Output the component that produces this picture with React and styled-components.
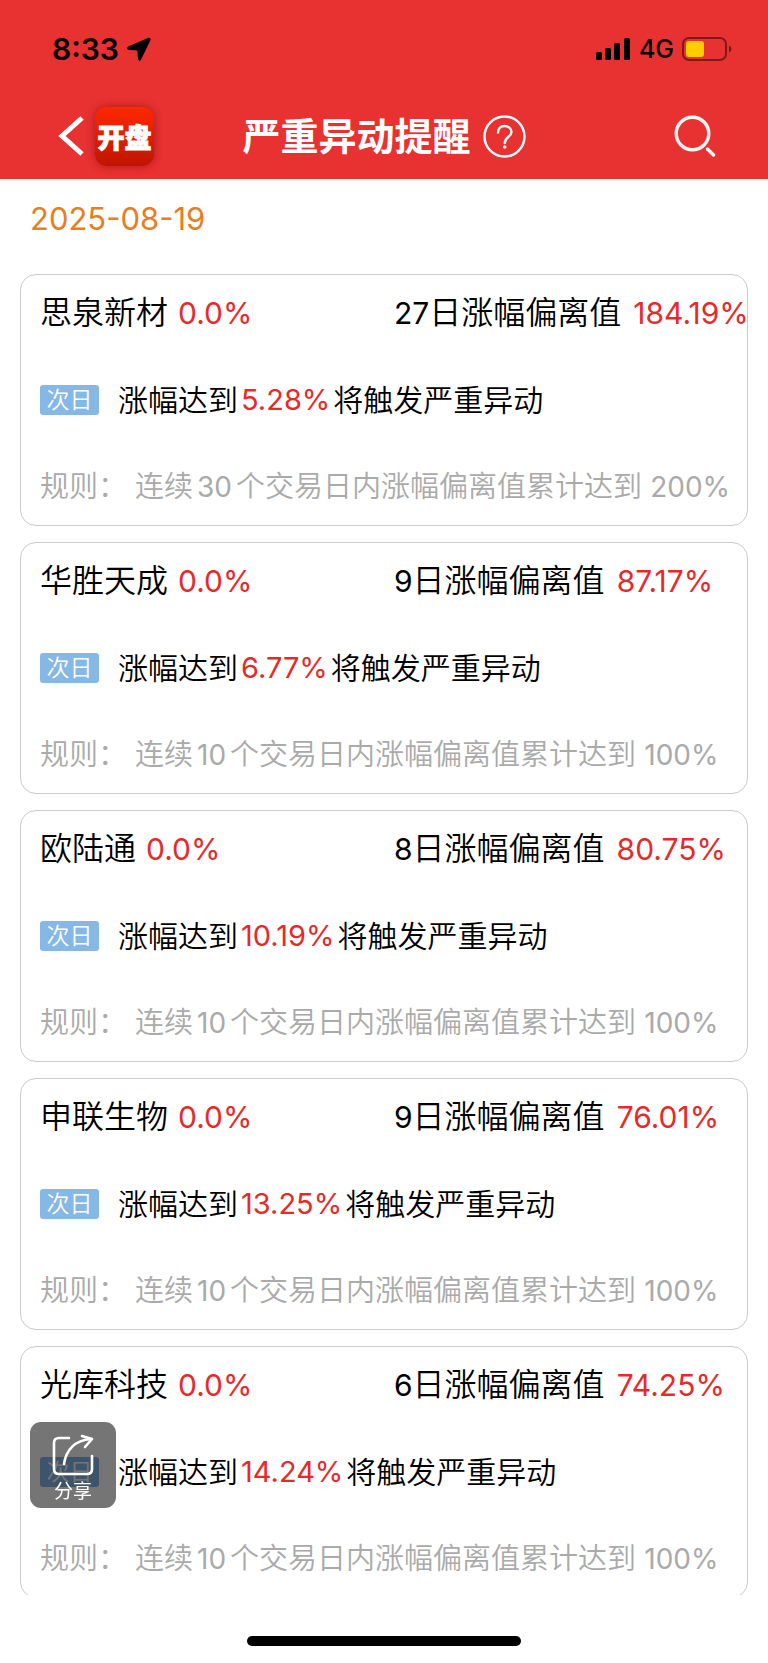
import React from 'react';
import styled, { createGlobalStyle } from 'styled-components';

const GlobalStyle = createGlobalStyle`
  * {
    box-sizing: border-box;
  }

  body {
    margin: 0;
    background-color: #fff;
    color: #000;
    font-family: Inter, 'Noto Sans CJK SC', sans-serif;
  }

  button {
    border: none;
    padding: 0;
    background: none;
    color: inherit;
    font-family: inherit;
    cursor: pointer;
  }

  svg {
    display: block;
  }
`;

const Page = styled.div`
  display: flex;
  flex-direction: column;
  height: 100vh;
`;

const Header = styled.header`
  flex: none;
  background-color: #e83131;
`;

const StatusBar = styled.div`
  display: flex;
  align-items: center;
  justify-content: space-between;
  height: 93px;
  padding: 5px 36px 0 52px;
`;

const StatusGroup = styled.div`
  display: flex;
  align-items: center;
  gap: 8px;
`;

const Clock = styled.time`
  font-size: 30px;
  font-weight: 600;
  line-height: 36px;
`;

const Network = styled.span`
  padding-left: 1px;
  font-size: 25px;
  font-weight: 500;
  line-height: 30px;
`;

const NavBar = styled.nav`
  display: grid;
  grid-template-columns: 1fr auto 1fr;
  align-items: center;
  height: 86px;
  padding: 0 52px;
  color: #fff;
`;

const NavLeft = styled.div`
  display: flex;
  align-items: center;
  gap: 10px;
  padding-left: 6px;
`;

const AppLogo = styled.span`
  display: flex;
  align-items: center;
  justify-content: center;
  width: 59px;
  height: 59px;
  border-radius: 12px;
  background: linear-gradient(#ff2800, #c01400);
  box-shadow: 0 0 8px rgba(90, 0, 0, 0.45);
  font-size: 27px;
  font-weight: 900;
  -webkit-text-stroke: 1px #fff;
`;

const TitleGroup = styled.div`
  display: flex;
  align-items: center;
  gap: 12px;
`;

const Title = styled.h1`
  margin: 0;
  font-size: 38px;
  font-weight: 700;
  line-height: 44px;
  white-space: nowrap;
`;

const SearchButton = styled.button`
  justify-self: end;
`;

const Content = styled.main`
  flex: 1;
  min-height: 0;
  overflow-y: auto;
  scrollbar-width: none;
  padding: 0 20px;
`;

const DateLabel = styled.h2`
  margin: 0;
  padding: 18px 10px 33px;
  color: #e67e22;
  font-size: 31px;
  font-weight: 400;
  line-height: 44px;
`;

const CardList = styled.div`
  display: flex;
  flex-direction: column;
  gap: 16px;
`;

const Card = styled.article`
  display: flex;
  flex-direction: column;
  gap: 43px;
  padding: 16px 19px;
  border: 1px solid #ccc;
  border-radius: 16px;
  font-weight: 350;
  line-height: 44px;
  white-space: nowrap;
`;

const CardTop = styled.div`
  display: grid;
  grid-template-columns: minmax(0, 1fr) minmax(0, 1fr);
  gap: 20px;
  font-size: 32px;
`;

const Pair = styled.div`
  display: flex;
  gap: ${({ $gap }) => $gap || 10}px;
`;

const StockName = styled.h3`
  margin: 0;
  font-size: 32px;
  font-weight: 350;
`;

const Num = styled.span`
  margin: 0 ${({ $space }) => $space || 0}px;
  color: ${({ $red }) => ($red ? '#e62a2a' : 'inherit')};
  font-size: ${({ $size }) => $size || 30}px;
  font-weight: 400;
`;

const Trigger = styled.div`
  display: flex;
  align-items: center;
  gap: 3px;
  font-size: 30px;
`;

const Tag = styled.span`
  width: 59px;
  margin-right: 16px;
  border-radius: 3px;
  background-color: #86b8e6;
  color: #fff;
  font-size: 23px;
  line-height: 30px;
  text-align: center;
`;

const Rule = styled.div`
  display: flex;
  gap: 8px;
  color: #aaa;
  font-size: 29px;
`;

const ShareButton = styled.button`
  position: fixed;
  left: 30px;
  bottom: 155px;
  display: flex;
  flex-direction: column;
  align-items: center;
  gap: 3px;
  width: 86px;
  height: 86px;
  padding-top: 12px;
  border-radius: 11px;
  background-color: rgba(0, 0, 0, 0.54);
  color: #fff;
  font-size: 19px;
  line-height: 26px;
`;

const Footer = styled.footer`
  display: flex;
  flex: none;
  justify-content: center;
  height: 68px;
  padding-top: 41px;
`;

const HomeIndicator = styled.div`
  width: 274px;
  height: 10px;
  border-radius: 5px;
  background-color: #000;
`;

const stocks = [
  { name: '思泉新材', change: '0.0%', days: 27, deviation: '184.19%', trigger: '5.28%', period: 30, limit: '200%' },
  { name: '华胜天成', change: '0.0%', days: 9, deviation: '87.17%', trigger: '6.77%', period: 10, limit: '100%' },
  { name: '欧陆通', change: '0.0%', days: 8, deviation: '80.75%', trigger: '10.19%', period: 10, limit: '100%' },
  { name: '申联生物', change: '0.0%', days: 9, deviation: '76.01%', trigger: '13.25%', period: 10, limit: '100%' },
  { name: '光库科技', change: '0.0%', days: 6, deviation: '74.25%', trigger: '14.24%', period: 10, limit: '100%' },
];

const LocationIcon = () => (
  <svg width="24" height="24" viewBox="0 0 24 24" aria-hidden="true">
    <path d="M21.500.8 1.200 9.600Q-1.200 11.800 1.500 12.800L10.300 13.500 11 22Q12 25 14 22.800L23.500 3Q24 0 21.500.8Z" />
  </svg>
);

const SignalIcon = () => (
  <svg width="34" height="24" viewBox="0 0 34 24" aria-hidden="true">
    <rect x="0" y="15" width="6" height="8" rx="1.500" />
    <rect x="9" y="11" width="6" height="12" rx="1.500" />
    <rect x="18" y="6" width="6" height="17" rx="1.500" />
    <rect x="28" y="1" width="6" height="22" rx="1.500" />
  </svg>
);

const BatteryIcon = () => (
  <svg width="50" height="24" viewBox="0 0 50 24" aria-hidden="true">
    <rect x="1" y="1" width="43" height="22" rx="6" fill="none" stroke="#000" strokeOpacity="0.45" strokeWidth="2" />
    <path d="M47 8.500Q49.500 9.500 49.500 12T47 15.500Z" fillOpacity="0.5" />
    <rect x="4" y="4" width="18" height="16" rx="3" fill="#ffcc00" />
  </svg>
);

const BackIcon = () => (
  <svg width="27" height="42" viewBox="0 0 27 42" fill="none" stroke="#fff" strokeWidth="5" aria-hidden="true">
    <path d="M24 3 4 21 24 39" />
  </svg>
);

const HelpIcon = () => (
  <svg width="43" height="43" viewBox="0 0 43 43" fill="none" stroke="#fff" strokeWidth="2.400" aria-hidden="true">
    <circle cx="21.500" cy="21.500" r="20" />
    <path d="M15 17.500C15 13 18 11 21.500 11S28.500 13.500 28.500 17C28.500 22 21.800 21.500 21.800 28" strokeLinecap="round" />
    <circle cx="21.700" cy="32" r="1.800" fill="#fff" stroke="none" />
  </svg>
);

const SearchIcon = () => (
  <svg width="42" height="42" viewBox="0 0 42 42" fill="none" stroke="#fff" strokeOpacity="0.95" aria-hidden="true">
    <circle cx="18.500" cy="18.500" r="16.300" strokeWidth="3.400" />
    <path d="M33.500 34 39.500 40" strokeWidth="3.400" strokeLinecap="round" />
  </svg>
);

const ShareIcon = () => (
  <svg width="42" height="42" viewBox="0 0 42 42" fill="none" stroke="#fff" strokeWidth="2.600" strokeLinecap="round" strokeLinejoin="round" aria-hidden="true">
    <path d="M17 4H7Q2 4 2 9V35Q2 40 7 40H35Q40 40 40 35V22" />
    <path d="M12 30C14 16 23 6 39 5" />
    <path d="M30 2 40 5 33 13" />
  </svg>
);

const StockCard = ({ stock }) => (
  <Card>
    <CardTop>
      <Pair>
        <StockName>{stock.name}</StockName>
        <Num $red>{stock.change}</Num>
      </Pair>
      <Pair $gap={12}>
        <span><Num>{stock.days}</Num>日涨幅偏离值</span>
        <Num $red>{stock.deviation}</Num>
      </Pair>
    </CardTop>
    <Trigger>
      <Tag>次日</Tag>
      <span>涨幅达到</span>
      <Num $red $size={29}>{stock.trigger}</Num>
      <span>将触发严重异动</span>
    </Trigger>
    <Rule>
      <span>规则：</span>
      <span>连续<Num $size={28} $space={4}>{stock.period}</Num>个交易日内涨幅偏离值累计达到 <Num $size={28}>{stock.limit}</Num></span>
    </Rule>
  </Card>
);

const App = () => (
  <Page>
    <GlobalStyle />
    <Header>
      <StatusBar>
        <StatusGroup>
          <Clock>8:33</Clock>
          <LocationIcon />
        </StatusGroup>
        <StatusGroup>
          <SignalIcon />
          <Network>4G</Network>
          <BatteryIcon />
        </StatusGroup>
      </StatusBar>
      <NavBar>
        <NavLeft>
          <button type="button" aria-label="返回"><BackIcon /></button>
          <AppLogo>开盘</AppLogo>
        </NavLeft>
        <TitleGroup>
          <Title>严重异动提醒</Title>
          <button type="button" aria-label="帮助"><HelpIcon /></button>
        </TitleGroup>
        <SearchButton type="button" aria-label="搜索"><SearchIcon /></SearchButton>
      </NavBar>
    </Header>
    <Content>
      <DateLabel>2025-08-19</DateLabel>
      <CardList>
        {stocks.map((stock) => (
          <StockCard key={stock.name} stock={stock} />
        ))}
      </CardList>
    </Content>
    <Footer>
      <HomeIndicator />
    </Footer>
    <ShareButton type="button">
      <ShareIcon />
      分享
    </ShareButton>
  </Page>
);

export default App;
